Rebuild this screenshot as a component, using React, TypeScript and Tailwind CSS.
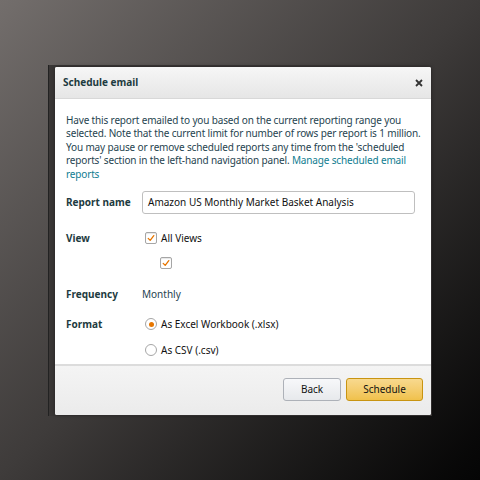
import React from "react"

function Check() {
  return (
    <span className="w-[12px] h-[12px] rounded-[2px] border border-[#a6a6a6] bg-white flex items-center justify-center shadow-[inset_0_1px_1px_rgba(0,0,0,0.1)]">
      <svg width="8" height="8" viewBox="0 0 10 10">
        <path d="M1.5 5.5 L4 8 L8.5 2" fill="none" stroke="#e77600" strokeWidth="1.6" strokeLinecap="round" strokeLinejoin="round" />
      </svg>
    </span>
  )
}

function Radio({ on }: { on?: boolean }) {
  return (
    <span className="w-[12px] h-[12px] rounded-full border border-[#a6a6a6] bg-white flex items-center justify-center">
      {on && <span className="w-[5px] h-[5px] rounded-full bg-[#e77600]" />}
    </span>
  )
}

function Row({ label, className, children }: { label?: string; className: string; children: React.ReactNode }) {
  return (
    <div className={`flex items-center ${className}`}>
      <span className="w-[76px] shrink-0 font-bold text-[#1d3b40]">{label}</span>
      <div className="flex-1 flex items-center">{children}</div>
    </div>
  )
}

export default function App() {
  return (
    <div
      className="w-[480px] h-[480px] bg-gradient-to-br from-[#736e6c] via-[#3e3b3a] to-[#050505] pt-[65px] pl-[48px]"
      style={{ fontFamily: '"Noto Sans", "Open Sans", Arial, sans-serif' }}
    >
      <div className="w-[384px] h-[351px] bg-[#3a3736] border-l border-[#222] pt-[2px] pl-[6px]">
        <div className="w-[376px] h-[348px] bg-white rounded-[2px] flex flex-col overflow-hidden shadow-[0_0_4px_rgba(0,0,0,0.4)]">
          <div className="h-[32px] shrink-0 bg-gradient-to-b from-[#f6f6f6] to-[#e6e6e6] border-b border-[#d8d8d8] flex items-center justify-between pl-[8px] pr-[8px]">
            <span className="text-[10px] font-bold text-[#1d3b40]">Schedule email</span>
            <svg width="8" height="8" viewBox="0 0 8 8">
              <path d="M1 1 L7 7 M7 1 L1 7" stroke="#333" strokeWidth="1.8" />
            </svg>
          </div>
          <div className="flex-1 pt-[15px] pl-[11px] pr-[8px] text-[10px]">
            <p className="leading-[13.4px] tracking-[-0.15px] text-[#1f4450] whitespace-nowrap">
              Have this report emailed to you based on the current reporting range you
              <br />
              selected. Note that the current limit for number of rows per report is 1 million.
              <br />
              You may pause or remove scheduled reports any time from the 'scheduled
              <br />
              reports' section in the left-hand navigation panel.{" "}
              <span className="text-[#0f7d91]">Manage scheduled email</span>
              <br />
              <span className="text-[#0f7d91]">reports</span>
            </p>
            <Row label="Report name" className="h-[23px] mt-[10px] pr-[8px]">
              <div className="w-full h-[23px] border border-[#bfbfbf] rounded-[3px] flex items-center px-[5px] text-[#111]">
                Amazon US Monthly Market Basket Analysis
              </div>
            </Row>
            <Row label="View" className="h-[12px] mt-[18px]">
              <div className="flex items-center gap-[4px] pl-[3px] text-[#111]">
                <Check />
                <span>All Views</span>
              </div>
            </Row>
            <Row className="h-[12px] mt-[13px]">
              <div className="pl-[18px]">
                <Check />
              </div>
            </Row>
            <Row label="Frequency" className="h-[12px] mt-[19px]">
              <span className="text-[#1f4450]">Monthly</span>
            </Row>
            <Row label="Format" className="h-[12px] mt-[18px]">
              <div className="flex items-center gap-[4px] pl-[3px] text-[#111]">
                <Radio on />
                <span>As Excel Workbook (.xlsx)</span>
              </div>
            </Row>
            <Row className="h-[12px] mt-[14px]">
              <div className="flex items-center gap-[4px] pl-[3px] text-[#111]">
                <Radio />
                <span>As CSV (.csv)</span>
              </div>
            </Row>
          </div>
          <div className="h-[51px] shrink-0 bg-gradient-to-b from-[#f4f4f4] to-[#ebebeb] border-t-2 border-[#dcdcdc] flex items-center justify-end gap-[5px] pr-[8px] pb-[2px]">
            <button className="w-[58px] h-[23px] rounded-[3px] border border-[#adb1b8] bg-gradient-to-b from-[#f7f8fa] to-[#e7e9ec] text-[10px] text-[#111]">
              Back
            </button>
            <button className="w-[77px] h-[23px] rounded-[3px] border border-[#c89411] bg-gradient-to-b from-[#f8d98e] to-[#f0c14b] text-[10px] text-[#111]">
              Schedule
            </button>
          </div>
        </div>
      </div>
    </div>
  )
}
